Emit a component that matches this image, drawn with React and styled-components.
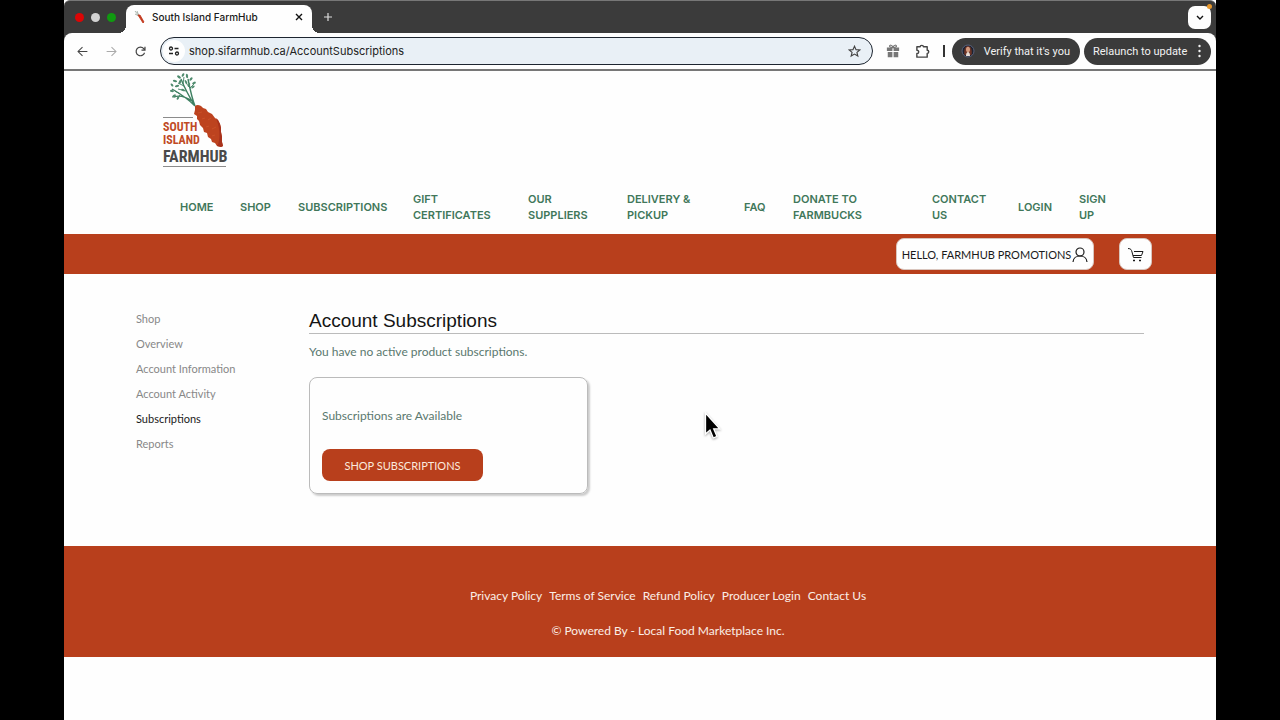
import React from 'react'
import styled, { createGlobalStyle } from 'styled-components'

const GlobalStyle = createGlobalStyle`
  * {
    box-sizing: border-box;
  }
  body {
    margin: 0;
    background: #000;
    font-family: Lato, 'Open Sans', sans-serif;
  }
  a {
    text-decoration: none;
    color: inherit;
  }
  button {
    border: 0;
    padding: 0;
    background: none;
    font-family: inherit;
    color: inherit;
  }
  svg {
    flex: none;
  }
`

const Screen = styled.div`
  display: flex;
  flex-direction: column;
  min-height: 100vh;
  margin: 0 5%;
  background: #fefefe;
`

/* browser window */

const TabStrip = styled.div`
  display: flex;
  align-items: center;
  height: 33px;
  padding: 0 5px 0 11px;
  background: #3b3b3b;
  border-top: 1px solid #777;
  border-radius: 6px 6px 0 0;
  font-family: Inter, sans-serif;
`

const Lights = styled.div`
  display: flex;
  gap: 7px;
  margin-right: 10px;
`

const Light = styled.span`
  width: 9px;
  height: 9px;
  border-radius: 50%;
  background: ${({ color }) => color};
`

const Tab = styled.div`
  position: relative;
  display: flex;
  align-items: center;
  align-self: flex-end;
  width: 186px;
  height: 28px;
  padding: 0 8px 5px 8px;
  border-radius: 8px 8px 0 0;
  background: #fefefe;
  color: #1a1a1a;
  font-size: 10px;
  font-weight: 500;
  &::before,
  &::after {
    content: '';
    position: absolute;
    bottom: 0;
    width: 8px;
    height: 8px;
  }
  &::before {
    left: -8px;
    background: radial-gradient(circle at 0 0, #3b3b3b 8px, #fefefe 8px);
  }
  &::after {
    right: -8px;
    background: radial-gradient(circle at 100% 0, #3b3b3b 8px, #fefefe 8px);
  }
`

const TabTitle = styled.span`
  flex: 1;
  margin-left: 6px;
  white-space: nowrap;
`

const IconButton = styled.button`
  display: flex;
  align-items: center;
  justify-content: center;
  width: ${({ $size }) => $size || 16}px;
  height: ${({ $size }) => $size || 16}px;
  color: ${({ $color }) => $color || '#444'};
`

const NewTab = styled(IconButton)`
  margin-left: 8px;
`

const TabSearch = styled(IconButton)`
  position: relative;
  margin-left: auto;
  border-radius: 7px;
  background: #fefefe;
  &::after {
    content: '';
    position: absolute;
    top: -2px;
    right: -1px;
    width: 5px;
    height: 5px;
    border-radius: 50%;
    background: #e8982c;
  }
`

const ToolbarEdge = styled.div`
  background: #3b3b3b;
`

const Toolbar = styled.div`
  display: flex;
  align-items: center;
  height: 38px;
  padding: 0 5px 0 10px;
  background: #fefefe;
  border-bottom: 2px solid #777;
  border-radius: 8px 8px 0 0;
  font-family: Inter, sans-serif;
`

const History = styled.div`
  display: flex;
  gap: 13px;
  margin-right: 12px;
`

const AddressBar = styled.form`
  display: flex;
  align-items: center;
  flex: 1;
  height: 28px;
  padding: 0 10px 0 2px;
  border: 1px solid #1d2530;
  border-radius: 14px;
  background: #e9f0f6;
`

const SiteInfo = styled(IconButton)`
  border-radius: 50%;
  background: #fefefe;
`

const AddressInput = styled.input`
  flex: 1;
  min-width: 0;
  margin-left: 4px;
  padding: 0;
  border: 0;
  outline: 0;
  background: none;
  color: #222;
  font-family: Inter, sans-serif;
  font-size: 11px;
`

const Extensions = styled.div`
  display: flex;
  align-items: center;
  gap: 13px;
  margin: 0 7px 0 12px;
`

const Divider = styled.span`
  width: 2px;
  height: 12px;
  background: #333;
`

const Pill = styled.button`
  display: flex;
  align-items: center;
  justify-content: space-between;
  width: ${({ $width }) => $width}px;
  height: 27px;
  margin-left: ${({ $gap }) => $gap || 0}px;
  padding: 0 10px 0 9px;
  border-radius: 14px;
  background: #3b3b3b;
  color: #f2f2f2;
  font-family: Roboto, sans-serif;
  font-size: 11px;
  white-space: nowrap;
`

/* shop page */

const Header = styled.header`
  padding: 0 28px;
`

const LogoLink = styled.a`
  display: block;
  width: 80px;
  height: 100px;
  margin-left: 64px;
`

const Nav = styled.nav`
  display: flex;
  align-items: center;
  gap: 28px;
  height: 63px;
  padding: 8px 0 0 88px;
  color: #41775a;
  font-family: Inter, sans-serif;
  font-size: 11px;
  font-weight: 600;
  line-height: 16px;
  text-transform: uppercase;
`

const NavLink = styled.a`
  flex: none;
  width: ${({ $width }) => $width}px;
  white-space: ${({ $wrap }) => ($wrap ? 'normal' : 'nowrap')};
`

const AccountBar = styled.div`
  display: flex;
  align-items: center;
  justify-content: flex-end;
  gap: 25px;
  height: 40px;
  padding-right: 64px;
  background: #b83f1c;
`

const BarButton = styled.button`
  display: flex;
  align-items: center;
  justify-content: center;
  gap: 1px;
  width: ${({ $width }) => $width}px;
  height: 32px;
  border: 1px solid #d9c5bd;
  border-radius: 8px;
  background: #fefefe;
  color: #1a1a1a;
  font-size: 11px;
  white-space: nowrap;
`

const Content = styled.div`
  display: flex;
  padding: 32px 72px 52px;
`

const Sidebar = styled.nav`
  display: flex;
  flex-direction: column;
  flex: none;
  width: 173px;
  font-size: 11px;
  line-height: 25px;
`

const SideLink = styled.a`
  color: ${({ $active }) => ($active ? '#1a1a1a' : '#888')};
`

const Main = styled.main`
  flex: 1;
  color: #5a786e;
  font-size: 12px;
`

const PageTitle = styled.h1`
  margin: 0 0 8px;
  padding-top: 3px;
  border-bottom: 1px solid #bbb;
  color: #151515;
  font-family: 'Liberation Sans', Arial, sans-serif;
  font-size: 19px;
  font-weight: 400;
  line-height: 24px;
`

const Text = styled.p`
  margin: 0;
  line-height: 20px;
`

const Card = styled.section`
  width: 279px;
  margin-top: 15px;
  padding: 28px 12px 12px;
  border: 1px solid #bbb;
  border-radius: 8px;
  box-shadow: 2px 2px 2px #ccc;
`

const ShopButton = styled.button`
  width: 161px;
  height: 32px;
  margin-top: 23px;
  border-radius: 8px;
  background: #b83f1c;
  color: #fbe9dc;
  font-size: 11px;
`

const Footer = styled.footer`
  display: flex;
  flex-direction: column;
  align-items: center;
  gap: 15px;
  height: 111px;
  padding: 40px 0 0 56px;
  background: #b83f1c;
  color: #fbeee6;
  font-size: 12px;
  line-height: 20px;
`

const FooterLinks = styled.div`
  display: flex;
  gap: 7px;
`

const Pointer = styled.svg`
  position: absolute;
  left: 703px;
  top: 411px;
  filter: drop-shadow(0 1px 1px rgba(0, 0, 0, 0.35));
`

const Icon = ({ size = 12, box = 16, width = 1.5, children }) => (
  <svg
    width={size}
    height={size}
    viewBox={`0 0 ${box} ${box}`}
    fill="none"
    stroke="currentColor"
    strokeWidth={width}
    aria-hidden="true"
  >
    {children}
  </svg>
)

const Favicon = () => (
  <svg width="12" height="14" viewBox="0 0 12 14" aria-hidden="true">
    <path d="M1 1l4 5M3 1l2 5M1 4l4 2" stroke="#a9b5ad" fill="none" />
    <path d="M4 5l2 0 4 7-1 1z" fill="#c2371c" stroke="#c2371c" strokeWidth="0.8" />
  </svg>
)

const Avatar = () => (
  <svg width="14" height="14" viewBox="0 0 14 14" aria-hidden="true">
    <circle cx="7" cy="7" r="6" fill="#1c2230" stroke="#59617a" />
    <path d="M3.500 11c-1-5 .5-9 3.500-9s4.500 4 3.500 9z" fill="#6b3325" />
    <ellipse cx="7" cy="5.500" rx="2" ry="2.800" fill="#d39a7e" />
    <path d="M5 12c0-3 1-4 2-4s2 1 2 4z" fill="#e8ddd5" />
  </svg>
)

const Logo = () => (
  <svg width="80" height="100" viewBox="0 0 80 100" role="img" aria-label="South Island FarmHub">
    <g fill="none" stroke="#3f8062" strokeWidth="1.4">
      <path d="M39 35C34 27 29 18 25 8M39 35C31 27 23 22 16 18M39 35C36 28 34 18 32 8M36 30C30 26 23 24 18 26" />
      <path strokeWidth="0.9" d="M28 15l-6-3M27 13l1-7M30 20l-8-2M34 17l4-4M34 17l-4-5M24 23l-5-3M24 24l-3 4" />
    </g>
    <g fill="#4f8b6e">
      <ellipse cx="23" cy="6" rx="2.2" ry="1.2" transform="rotate(35 23 6)" />
      <ellipse cx="27" cy="4" rx="2" ry="1.1" transform="rotate(-60 27 4)" />
      <ellipse cx="31" cy="5" rx="2.2" ry="1.1" transform="rotate(80 31 5)" />
      <ellipse cx="35" cy="8" rx="2.1" ry="1.1" transform="rotate(-50 35 8)" />
      <ellipse cx="38" cy="12" rx="2" ry="1.1" transform="rotate(-25 38 12)" />
      <ellipse cx="37" cy="16" rx="2" ry="1" transform="rotate(-40 37 16)" />
      <ellipse cx="19" cy="10" rx="2.2" ry="1.1" transform="rotate(15 19 10)" />
      <ellipse cx="24" cy="11" rx="2.2" ry="1.1" transform="rotate(-70 24 11)" />
      <ellipse cx="21" cy="15" rx="2.2" ry="1.1" transform="rotate(-15 21 15)" />
      <ellipse cx="16" cy="14" rx="1.8" ry="1" transform="rotate(50 16 14)" />
      <ellipse cx="16" cy="20" rx="2" ry="1.1" transform="rotate(10 16 20)" />
      <ellipse cx="18" cy="25" rx="2.2" ry="1.1" transform="rotate(-35 18 25)" />
      <ellipse cx="22" cy="27" rx="2" ry="1" transform="rotate(-60 22 27)" />
      <ellipse cx="30" cy="11" rx="2.2" ry="1" transform="rotate(60 30 11)" />
      <ellipse cx="27" cy="19" rx="2" ry="1" transform="rotate(20 27 19)" />
      <ellipse cx="33" cy="14" rx="2" ry="1" transform="rotate(-70 33 14)" />
    </g>
    <path
      d="M39 35C41 33 45 34 47 37L50 38 52 41 56 43 59 47 62 49 64 53 65 57 65 61 66 66 66 71 67 75 65 76 61 75 59 72 56 71 55 68 52 66 51 62 48 61 47 57 44 54 43 50 41 48 41 45 38 43 39 39z"
      fill="#bd431f"
    />
    <path d="M60 47l2 2 2 4 1 4v4l1 5v5l1 4-2 1-4-1c3-4 4-16-1-28z" fill="#a8321c" />
    <path d="M42 42l4-1M46 48l3-1M55 47l-3 2M50 56l3-1M56 58l4-2M56 65l3-1" stroke="#c94f28" fill="none" />
    <path d="M7 46.500h30M7 95.500h63" stroke="#8b8b8b" />
    <g fontFamily="'Roboto Condensed', 'Liberation Sans Narrow', 'DejaVu Sans Condensed', sans-serif" fontWeight="700">
      <text x="7" y="60" fontSize="12" fill="#c04a25">SOUTH</text>
      <text x="7" y="73" fontSize="12" fill="#c04a25">ISLAND</text>
      <text x="7" y="91" fontSize="16" fill="#4a4a4a">FARMHUB</text>
    </g>
  </svg>
)

const navItems = [
  { label: 'Home', width: 32 },
  { label: 'Shop', width: 30 },
  { label: 'Subscriptions', width: 87 },
  { label: 'Gift Certificates', width: 87, wrap: true },
  { label: 'Our Suppliers', width: 71, wrap: true },
  { label: 'Delivery & Pickup', width: 89, wrap: true },
  { label: 'FAQ', width: 21 },
  { label: 'Donate to Farmbucks', width: 111, wrap: true },
  { label: 'Contact Us', width: 58, wrap: true },
  { label: 'Login', width: 33 },
  { label: 'Sign Up', width: 32, wrap: true },
]

const sideItems = ['Shop', 'Overview', 'Account Information', 'Account Activity', 'Subscriptions', 'Reports']

const footerItems = ['Privacy Policy', 'Terms of Service', 'Refund Policy', 'Producer Login', 'Contact Us']

const Browser = () => (
  <>
    <TabStrip>
      <Lights>
        <Light color="#dc0505" />
        <Light color="#d2d2d2" />
        <Light color="#109a10" />
      </Lights>
      <Tab>
        <Favicon />
        <TabTitle>South Island FarmHub</TabTitle>
        <IconButton $size={10} $color="#111" aria-label="Close tab">
          <Icon size={8} box={8} width={1.4}><path d="M1 1l6 6M7 1l-6 6" /></Icon>
        </IconButton>
      </Tab>
      <NewTab $color="#ddd" aria-label="New tab">
        <Icon size={10} box={10} width={1.2}><path d="M5 1v8M1 5h8" /></Icon>
      </NewTab>
      <TabSearch $size={23} $color="#111" aria-label="Search tabs">
        <Icon size={8} box={8} width={1.4}><path d="M1 3l3 3 3-3" /></Icon>
      </TabSearch>
    </TabStrip>
    <ToolbarEdge>
      <Toolbar>
        <History>
          <IconButton aria-label="Back">
            <Icon width={1.3} size={13}><path d="M14 8H3M8 2.500L2.500 8 8 13.500" /></Icon>
          </IconButton>
          <IconButton $color="#aaa" aria-label="Forward">
            <Icon width={1.3} size={13}><path d="M2 8h11M8 2.500L13.500 8 8 13.500" /></Icon>
          </IconButton>
          <IconButton aria-label="Reload">
            <Icon width={1.5} size={13}><path d="M13 9.500A5.300 5.300 0 1 1 12 4.500L13.500 6M13.500 2v4.300H9.200" /></Icon>
          </IconButton>
        </History>
        <AddressBar>
          <SiteInfo $size={22} $color="#222" type="button" aria-label="Site information">
            <Icon size={12} box={12} width={1.3}>
              <circle cx="3" cy="3.500" r="1.500" />
              <path d="M6.500 3.500h4M1 8.500h4" />
              <circle cx="9" cy="8.500" r="1.500" />
            </Icon>
          </SiteInfo>
          <AddressInput aria-label="Address" defaultValue="shop.sifarmhub.ca/AccountSubscriptions" />
          <IconButton type="button" aria-label="Bookmark">
            <Icon size={13} width={1.4}>
              <path d="M8 1.500l1.900 4.200 4.600.4-3.500 3 1.100 4.500L8 11.200l-4.100 2.400L5 9.100l-3.500-3 4.600-.4z" />
            </Icon>
          </IconButton>
        </AddressBar>
        <Extensions>
          <IconButton $color="#777" aria-label="Rewards">
            <Icon size={14} width={1.3}>
              <path d="M8 4C6 4 4 3.500 4 2.300S7 .500 8 4c1-3.500 4-2.900 4-1.700S10 4 8 4z" />
              <path fill="currentColor" stroke="none" d="M1 4h6.300v4H1zM8.700 4H15v4H8.700zM2 9h5.300v6H2zM8.700 9H14v6H8.700z" />
            </Icon>
          </IconButton>
          <IconButton aria-label="Extensions">
            <Icon size={15} width={1.5}>
              <path strokeLinejoin="round" d="M2 3h3.500c0-2 3.500-2 3.500 0h4v3.700c2.200 0 2.200 3.300 0 3.300v4H2v-3.800c2.600 0 2.600-3.600 0-3.600z" />
            </Icon>
          </IconButton>
          <Divider />
        </Extensions>
        <Pill $width={128}>
          <Avatar />
          Verify that it's you
        </Pill>
        <Pill $width={127} $gap={4}>
          Relaunch to update
          <svg width="3" height="14" viewBox="0 0 3 14" fill="currentColor" aria-hidden="true">
            <circle cx="1.500" cy="2" r="1.200" />
            <circle cx="1.500" cy="7" r="1.200" />
            <circle cx="1.500" cy="12" r="1.200" />
          </svg>
        </Pill>
      </Toolbar>
    </ToolbarEdge>
  </>
)

const App = () => {
  return (
    <Screen>
      <GlobalStyle />
      <Browser />
      <Header>
        <LogoLink href="#home">
          <Logo />
        </LogoLink>
        <Nav>
          {navItems.map((item) => (
            <NavLink key={item.label} href="#" $width={item.width} $wrap={item.wrap}>
              {item.label}
            </NavLink>
          ))}
        </Nav>
      </Header>
      <AccountBar>
        <BarButton $width={198}>
          HELLO, FARMHUB PROMOTIONS
          <Icon size={16} width={1.2}>
            <circle cx="8" cy="6" r="4" />
            <path d="M1 16c.5-8 13.500-8 14 0" />
          </Icon>
        </BarButton>
        <BarButton $width={33} aria-label="Cart">
          <Icon size={16} width={1}>
            <path d="M0 2.500C3 2.500 3.500 4 4 6l1.500 5.500h8M6 5.500h9L13.500 9.500H5" />
            <path fill="currentColor" d="M5.500 14h1v1h-1zM11.500 14h1v1h-1z" />
          </Icon>
        </BarButton>
      </AccountBar>
      <Content>
        <Sidebar>
          {sideItems.map((label) => (
            <SideLink key={label} href="#" $active={label === 'Subscriptions'}>
              {label}
            </SideLink>
          ))}
        </Sidebar>
        <Main>
          <PageTitle>Account Subscriptions</PageTitle>
          <Text>You have no active product subscriptions.</Text>
          <Card>
            <Text>Subscriptions are Available</Text>
            <ShopButton>SHOP SUBSCRIPTIONS</ShopButton>
          </Card>
        </Main>
      </Content>
      <Footer>
        <FooterLinks>
          {footerItems.map((label) => (
            <a key={label} href="#">{label}</a>
          ))}
        </FooterLinks>
        <Text>© Powered By - Local Food Marketplace Inc.</Text>
      </Footer>
      <Pointer width="18" height="30" viewBox="0 0 18 30" aria-hidden="true">
        <path
          d="M2.500 2v21l4.500-4 3.300 8 3.700-1.600-3.300-7.600h6z"
          fill="#000"
          stroke="#fff"
          strokeWidth="1.300"
        />
      </Pointer>
    </Screen>
  )
}

export default App
